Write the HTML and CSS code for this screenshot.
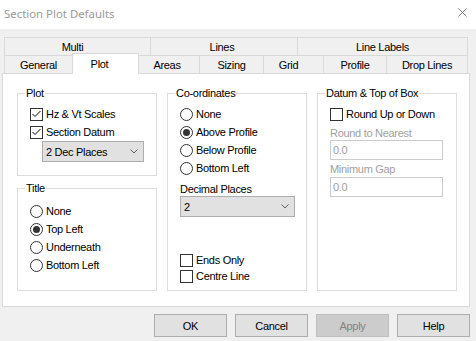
FILE: index.html
```html
<!DOCTYPE html>
<html lang="en">
<head>
  <meta charset="UTF-8" />
  <title>Section Plot Defaults</title>
  <link rel="stylesheet" href="styles.css">
</head>
<body>
  <div class="titlebar">
    <span class="title">Section Plot Defaults</span>
    <svg class="close" viewBox="0 0 9 9"><path d="M0.5 0.5L8.5 8.5M8.5 0.5L0.5 8.5" stroke="#7a7a7a" stroke-width="1" fill="none"/></svg>
  </div>

  <div class="tabs">
    <div class="tab-row">
      <div class="tab tab-multi">Multi</div>
      <div class="tab tab-lines">Lines</div>
      <div class="tab tab-labels">Line Labels</div>
    </div>
    <div class="tab-row">
      <div class="tab tab-general">General</div>
      <div class="tab tab-plot active">Plot</div>
      <div class="tab tab-areas">Areas</div>
      <div class="tab tab-sizing">Sizing</div>
      <div class="tab tab-grid">Grid</div>
      <div class="tab tab-profile">Profile</div>
      <div class="tab tab-drop">Drop Lines</div>
    </div>
  </div>

  <div class="panel">
    <div class="col">
      <div class="group group-plot">
        <span class="caption">Plot</span>
        <label class="opt"><span class="box"><svg viewBox="0 0 11 11"><polyline points="1.5,5 4,7.5 9.5,2" /></svg></span>Hz &amp; Vt Scales</label>
        <label class="opt"><span class="box"><svg viewBox="0 0 11 11"><polyline points="1.5,5 4,7.5 9.5,2" /></svg></span>Section Datum</label>
        <div class="select select-dec">
          <span>2 Dec Places</span>
          <svg class="chev" viewBox="0 0 8 5"><polyline points="0.5,0.5 4,4 7.5,0.5" /></svg>
        </div>
      </div>
      <div class="group group-title">
        <span class="caption">Title</span>
        <label class="opt"><span class="radio"></span>None</label>
        <label class="opt"><span class="radio on"></span>Top Left</label>
        <label class="opt"><span class="radio"></span>Underneath</label>
        <label class="opt"><span class="radio"></span>Bottom Left</label>
      </div>
    </div>

    <div class="group group-coords">
      <span class="caption">Co-ordinates</span>
      <label class="opt"><span class="radio"></span>None</label>
      <label class="opt"><span class="radio on"></span>Above Profile</label>
      <label class="opt"><span class="radio"></span>Below Profile</label>
      <label class="opt"><span class="radio"></span>Bottom Left</label>
      <div class="field-label">Decimal Places</div>
      <div class="select select-places">
        <span>2</span>
        <svg class="chev" viewBox="0 0 8 5"><polyline points="0.5,0.5 4,4 7.5,0.5" /></svg>
      </div>
      <div class="bottom-checks">
        <label class="opt opt-small"><span class="box"></span>Ends Only</label>
        <label class="opt opt-small"><span class="box"></span>Centre Line</label>
      </div>
    </div>

    <div class="group group-datum">
      <span class="caption">Datum &amp; Top of Box</span>
      <label class="opt"><span class="box"></span>Round Up or Down</label>
      <div class="field-label disabled first">Round to Nearest</div>
      <div class="input">0.0</div>
      <div class="field-label disabled second">Minimum Gap</div>
      <div class="input">0.0</div>
    </div>
  </div>

  <div class="buttons">
    <button class="btn">OK</button>
    <button class="btn">Cancel</button>
    <button class="btn" disabled>Apply</button>
    <button class="btn">Help</button>
  </div>
</body>
</html>
```

FILE: styles.css
```css
* { box-sizing: border-box; margin: 0; padding: 0; }
body {
  width: 476px;
  height: 341px;
  overflow: hidden;
  background: #f0f0f0;
  font-family: "Liberation Sans", Arial, sans-serif;
  font-size: 11px;
  letter-spacing: -0.3px;
  color: #000;
}
.titlebar {
  height: 29px;
  background: #fff;
  display: flex;
  align-items: center;
  justify-content: space-between;
  padding: 0 9px 2px 4px;
}
.titlebar .title {
  font-family: "Noto Sans", sans-serif;
  font-size: 11.4px;
  letter-spacing: 0;
  color: #9a9a9a;
}
.close { width: 9px; height: 9px; margin-top: -2px; }

/* tabs */
.tabs { margin-top: 8px; padding-left: 4px; }
.tab-row { display: flex; height: 19px; }
.tab-row + .tab-row { margin-top: -1px; }
.tab {
  height: 19px;
  border: 1px solid #d9d9d9;
  background: #f0f0f0;
  display: flex;
  align-items: center;
  justify-content: center;
}
.tab + .tab { margin-left: -1px; }
.tab.active {
  height: 21px;
  margin-top: -2px;
  background: #fff;
  border-bottom: none;
  position: relative;
  z-index: 1;
}
.tab-multi { width: 147px; padding-right: 10px; }
.tab-lines { width: 148px; padding-right: 4px; }
.tab-labels { width: 171px; }
.tab-general { width: 69px; }
.tab-plot { width: 67px; padding-right: 12px; }
.tab-areas { width: 62px; padding-right: 4px; }
.tab-sizing { width: 65px; }
.tab-grid { width: 61px; padding-right: 10px; }
.tab-profile { width: 64px; }
.tab-drop { width: 82px; }

/* panel */
.panel {
  margin: -1px 0 0 2px;
  width: 468px;
  height: 234px;
  background: #fff;
  border: 1px solid #d9d9d9;
  padding: 19px 0 0 14px;
  display: flex;
  align-items: flex-start;
  gap: 10px;
}
.col { display: flex; flex-direction: column; gap: 12px; width: 140px; }
.group {
  position: relative;
  width: 140px;
  border: 1px solid #dcdcdc;
  padding: 11px 0 0 12px;
  display: flex;
  flex-direction: column;
}
.group-plot { height: 83px; }
.group-title { height: 103px; padding-top: 13px; }
.group-coords, .group-datum { height: 198px; }
.caption {
  position: absolute;
  top: -7px;
  left: 7px;
  padding: 0 1px;
  background: #fff;
  line-height: 13px;
}

.opt { display: flex; align-items: center; gap: 3px; height: 18px; }
.opt-small { height: 16px; }
.box, .radio {
  width: 13px;
  height: 13px;
  flex: none;
  border: 1px solid #333;
  background: #fff;
  display: flex;
  align-items: center;
  justify-content: center;
}
.box svg { width: 11px; height: 11px; fill: none; stroke: #000; stroke-width: 1; }
.radio { border-radius: 50%; }
.radio.on::after {
  content: "";
  width: 7px;
  height: 7px;
  border-radius: 50%;
  background: #333;
}

.select {
  height: 21px;
  border: 1px solid #adadad;
  background: #e1e1e1;
  display: flex;
  align-items: center;
  justify-content: space-between;
  padding: 0 5px 0 3px;
}
.select-dec { width: 102px; margin-left: 12px; }
.select-places { width: 115px; }
.chev { width: 8px; height: 5px; fill: none; stroke: #606060; stroke-width: 1; }

.field-label { line-height: 14px; margin-top: 5px; }
.field-label.disabled { color: #a0a0a0; }
.field-label.first { margin-top: 3px; }
.field-label.second { margin-top: 2px; line-height: 15px; }
.input {
  width: 113px;
  height: 20px;
  border: 1px solid #cccccc;
  color: #a0a0a0;
  padding-left: 2px;
  display: flex;
  align-items: center;
}
.bottom-checks { margin-top: auto; padding-bottom: 6px; }

/* dialog buttons */
.buttons {
  display: flex;
  justify-content: flex-end;
  gap: 8px;
  padding: 7px 6px 0 0;
}
.btn {
  width: 73px;
  height: 23px;
  border: 1px solid #adadad;
  background: #e1e1e1;
  font: inherit;
  letter-spacing: inherit;
  color: #000;
}
.btn:disabled { background: #cccccc; border-color: #bfbfbf; color: #838383; }
```
